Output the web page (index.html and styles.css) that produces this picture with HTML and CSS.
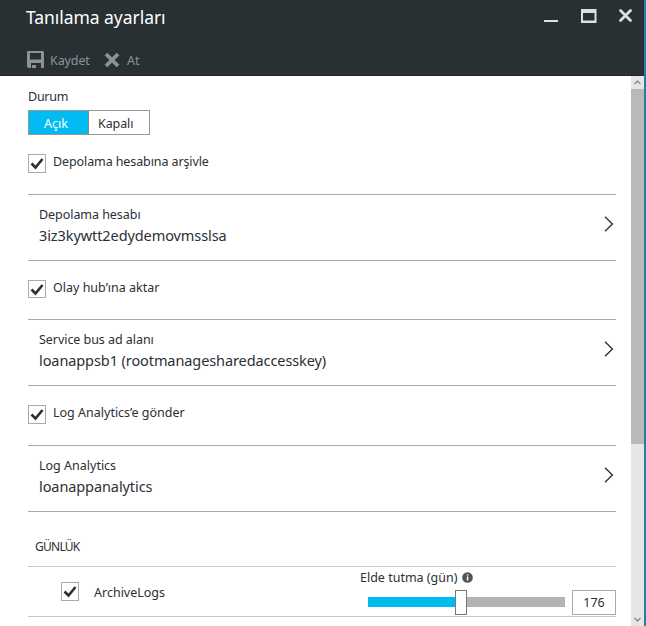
FILE: index.html
```html
<!DOCTYPE html>
<html lang="tr">
<head>
<meta charset="utf-8">
<title>Tanılama ayarları</title>
<link rel="stylesheet" href="styles.css">
</head>
<body>
<div class="blade">
  <header class="header">
    <div class="titlebar">
      <h1 class="title">Tanılama ayarları</h1>
      <svg class="window-controls" width="100" height="32" viewBox="0 0 100 32">
        <path d="M8 21h14" stroke="#dedfe0" stroke-width="2"/>
        <path d="M45 9h15.500v14H45zM47 13v7.500h11.500V13z" fill="#dedfe0" fill-rule="evenodd"/>
        <path d="M84.500 10.500l10 10M94.500 10.500l-10 10" stroke="#dedfe0" stroke-width="2.800" stroke-linecap="round"/>
      </svg>
    </div>
    <div class="toolbar">
      <svg width="18" height="18" viewBox="0 0 18 18">
        <path fill="#8f9294" fill-rule="evenodd" d="M1 0h15q1 0 1 1v15q0 1-1 1h-2v-5H4v5H1.500L0 15.500V1q0-1 1-1zM3 2v6.500h11V2z"/>
        <path fill="#8f9294" d="M5 14h4v3H5z"/>
      </svg>
      <span class="command save">Kaydet</span>
      <svg width="16" height="16" viewBox="0 0 16 16"><path d="M2 2l12 12M14 2L2 14" stroke="#8f9294" stroke-width="3.800"/></svg>
      <span class="command discard">At</span>
    </div>
  </header>
  <div class="body">
    <main class="content">
      <section class="status">
        <div class="label status-label">Durum</div>
        <div class="toggle"><span class="option on">Açık</span><span class="option off">Kapalı</span></div>
      </section>
      <div class="check-row">
        <span class="checkbox"><svg width="14" height="13" viewBox="0 0 14 13"><path d="M1.500 6.500l4 4 7-8.500" class="tick"/></svg></span>
        <span class="label t-archive">Depolama hesabına arşivle</span>
      </div>
      <div class="picker">
        <div class="picker-text"><div class="label t-storage">Depolama hesabı</div><div class="value v-storage">3iz3kywtt2edydemovmsslsa</div></div>
        <svg width="10" height="16" viewBox="0 0 10 16"><path d="M1 .8L8.400 8 1 15.200" class="chevron"/></svg>
      </div>
      <div class="check-row second">
        <span class="checkbox"><svg width="14" height="13" viewBox="0 0 14 13"><path d="M1.500 6.500l4 4 7-8.500" class="tick"/></svg></span>
        <span class="label t-hub">Olay hub’ına aktar</span>
      </div>
      <div class="picker">
        <div class="picker-text"><div class="label t-bus">Service bus ad alanı</div><div class="value v-bus">loanappsb1 (rootmanagesharedaccesskey)</div></div>
        <svg width="10" height="16" viewBox="0 0 10 16"><path d="M1 .8L8.400 8 1 15.200" class="chevron"/></svg>
      </div>
      <div class="check-row">
        <span class="checkbox"><svg width="14" height="13" viewBox="0 0 14 13"><path d="M1.500 6.500l4 4 7-8.500" class="tick"/></svg></span>
        <span class="label t-send">Log Analytics’e gönder</span>
      </div>
      <div class="picker">
        <div class="picker-text"><div class="label t-log">Log Analytics</div><div class="value v-log">loanappanalytics</div></div>
        <svg width="10" height="16" viewBox="0 0 10 16"><path d="M1 .8L8.400 8 1 15.200" class="chevron"/></svg>
      </div>
      <h2 class="heading"><span>GÜNLÜK</span></h2>
      <div class="log-row">
        <span class="checkbox"><svg width="14" height="13" viewBox="0 0 14 13"><path d="M1.500 6.500l4 4 7-8.500" class="tick"/></svg></span>
        <span class="label log-name">ArchiveLogs</span>
        <div class="retention">
          <div class="retention-label"><span class="label t-ret">Elde tutma (gün)</span>
            <svg width="11" height="11" viewBox="0 0 11 11"><circle cx="5.500" cy="5.500" r="5.300" fill="#50555a"/><path d="M4.800 4.500h1.500v4H4.800zM4.800 2.200h1.500v1.400H4.800z" fill="#fff"/></svg>
          </div>
          <div class="slider-row">
            <div class="slider"><span class="fill"></span><span class="thumb"></span><span class="rest"></span></div>
            <div class="days"><span class="label">176</span></div>
          </div>
        </div>
      </div>
    </main>
    <div class="scrollbar">
      <svg width="13" height="13" viewBox="0 0 13 13"><path d="M3.500 8l3-3 3 3" class="arrow"/></svg>
      <span class="scroll-thumb"></span>
      <svg class="down" width="13" height="13" viewBox="0 0 13 13"><path d="M3.500 5l3 3 3-3" class="arrow"/></svg>
    </div>
  </div>
</div>
</body>
</html>
```
FILE: styles.css
```css
* { box-sizing: border-box; }
body {
  margin: 0;
  width: 646px;
  height: 626px;
  overflow: hidden;
  background: #fff;
  color: #2b3035;
  font-family: "Noto Sans", "Open Sans", sans-serif;
  font-size: 12.5px;
}
svg { display: block; flex: none; }
span, h1, h2, .label, .value { white-space: nowrap; }
.blade { height: 626px; border-right: 2px solid #2c7ba6; display: flex; flex-direction: column; }
.header { height: 76px; flex: none; background: #293034; border-bottom: 1px solid #20252a; }
.titlebar { height: 44px; display: flex; justify-content: space-between; padding-left: 26px; }
.title { margin: 4px 0 0; height: 26px; line-height: 26px; font-size: 17.5px; letter-spacing: -0.05px; font-weight: 400; color: #fff; }
.window-controls { margin-right: 8px; }
.toolbar { display: flex; align-items: center; height: 32px; padding-left: 27px; color: #8f9294; }
.command { line-height: 20px; margin-top: 1px; }
.save { width: 42px; margin: 1px 12px 0 5px; letter-spacing: -0.1px; }
.discard { margin-left: 7px; }
.body { flex: 1; min-height: 0; display: flex; }
.content { width: 631px; padding: 0 15px 0 28px; overflow: hidden; }
.label { line-height: 18px; }
.status { height: 59px; padding-top: 12px; }
.status-label { letter-spacing: -0.25px; }
.toggle { display: flex; width: 122px; height: 25px; margin-top: 4px; border: 1px solid #999; }
.option { display: block; line-height: 25px; height: 23px; }
.on { width: 60px; padding-left: 15px; background: #00bcf2; color: #fff; border-right: 1px solid #888; }
.off { padding-left: 9px; letter-spacing: -0.1px; }
.check-row { display: flex; height: 59px; padding-top: 19px; }
.second { height: 58px; }
.checkbox { display: flex; flex: none; align-items: center; justify-content: center; width: 18px; height: 19px; border: 1px solid #aaa; }
.second .checkbox { height: 18px; }
.check-row .label { margin: -1px 0 0 7px; }
.t-archive { letter-spacing: -0.1px; }
.t-storage, .t-bus { letter-spacing: -0.05px; }
.tick { fill: none; stroke: #2b3035; stroke-width: 2.6; }
.picker { height: 67px; display: flex; justify-content: space-between; border-top: 1px solid #aaa; border-bottom: 1px solid #aaa; padding: 11px 2px 0 11px; }
.picker > svg { margin-top: 10px; }
.value { font-size: 14.5px; line-height: 22px; margin-top: 0; letter-spacing: -0.09px; }
.chevron { fill: none; stroke: #30353a; stroke-width: 1.4; }
.heading { height: 54px; margin: 0; padding: 26px 0 0 7px; font-size: 12px; line-height: 18px; font-weight: 400; letter-spacing: -0.75px; }
.log-row { height: 51px; display: flex; border-top: 1px solid #c8c8c8; border-bottom: 1px solid #c8c8c8; padding-left: 33px; }
.log-row .checkbox { margin-top: 15px; }
.log-name { width: 266px; margin: 17px 0 0 15px; }
.retention { width: 256px; flex: none; }
.retention-label { display: flex; height: 22px; padding-top: 2px; }
.retention-label svg { margin: 3px 0 0 4px; }
.slider-row { display: flex; height: 26px; align-items: center; padding-left: 8px; }
.slider { display: flex; align-items: center; width: 197px; }
.fill { width: 87px; height: 10px; background: #00bcf2; }
.thumb { width: 12px; height: 25px; background: #fff; border: 1px solid #777; }
.rest { flex: 1; height: 10px; background: #b3b3b3; }
.days { width: 44px; height: 25px; margin-left: 7px; border: 1px solid #aaa; line-height: 23px; text-align: center; }
.scrollbar { width: 13px; display: flex; flex-direction: column; background: #e6e6e6; }
.scroll-thumb { height: 355px; background: #b9b9b9; }
.down { margin-top: auto; }
.arrow { fill: none; stroke: #888; stroke-width: 1.3; }
```
